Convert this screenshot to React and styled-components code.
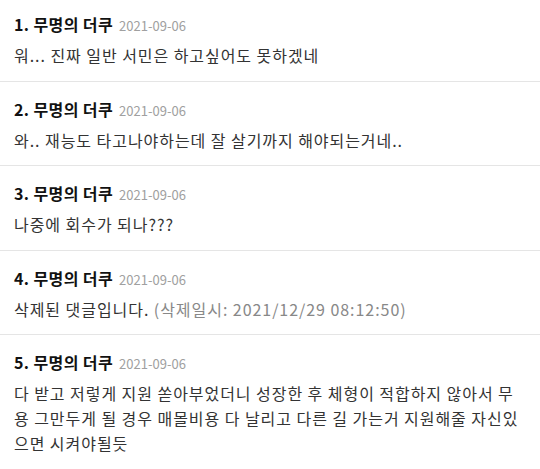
import React from "react";
import styled, { createGlobalStyle } from "styled-components";

const Global = createGlobalStyle`
  html, body { margin: 0; padding: 0; background: #fff; }
  body { font-family: "Noto Sans CJK KR", "Noto Sans", sans-serif; }
`;

const List = styled.ul`
  list-style: none;
  margin: -3px 0 0;
  padding: 0;
`;

const Item = styled.li`
  padding: 14px 18px 12.5px 14px;
  border-bottom: 1px solid #e5e5e5;
`;

const Header = styled.div`
  display: flex;
  align-items: baseline;
  gap: 6px;
  height: 26px;
  line-height: 26px;
  white-space: nowrap;
`;

const Name = styled.span`
  font-size: 16px;
  font-weight: 700;
  color: #111;
  letter-spacing: 0.4px;
`;

const DateText = styled.span`
  font-size: 13px;
  color: #a0a0a0;
`;

const Body = styled.p`
  margin: 6px 0 0;
  font-size: 16px;
  letter-spacing: 0.95px;
  line-height: 25px;
  color: #333;
  word-break: break-all;
`;

const Muted = styled.span`
  color: #888;
`;

const comments = [
  { n: 1, text: "워... 진짜 일반 서민은 하고싶어도 못하겠네" },
  { n: 2, text: "와.. 재능도 타고나야하는데 잘 살기까지 해야되는거네.." },
  { n: 3, text: "나중에 회수가 되나???" },
  { n: 4, deleted: "(삭제일시: 2021/12/29 08:12:50)", text: "삭제된 댓글입니다." },
  {
    n: 5,
    text:
      "다 받고 저렇게 지원 쏟아부었더니 성장한 후 체형이 적합하지 않아서 무용 그만두게 될 경우 매몰비용 다 날리고 다른 길 가는거 지원해줄 자신있으면 시켜야될듯",
  },
];

export default function App() {
  return (
    <>
      <Global />
      <List>
        {comments.map((c) => (
          <Item key={c.n}>
            <Header>
              <Name>{c.n}. 무명의 더쿠</Name>
              <DateText>2021-09-06</DateText>
            </Header>
            <Body>
              {c.text}
              {c.deleted && <Muted> {c.deleted}</Muted>}
            </Body>
          </Item>
        ))}
      </List>
    </>
  );
}
